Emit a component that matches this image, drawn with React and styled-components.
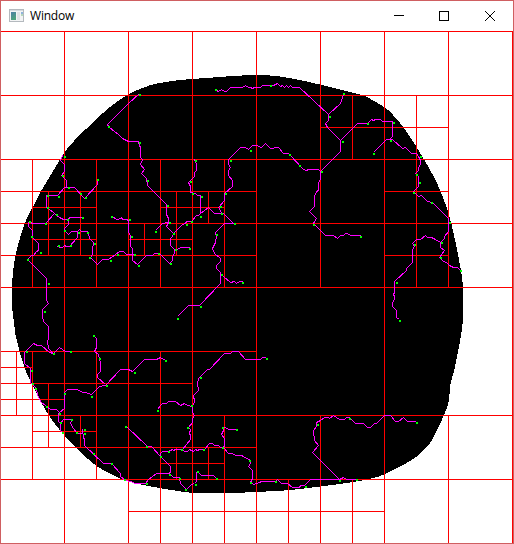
import React from 'react';
import styled, { createGlobalStyle } from 'styled-components';

const GlobalStyle = createGlobalStyle`
  html, body { margin: 0; padding: 0; background: #fff; }
`;

const WindowFrame = styled.main`
  position: relative;
  display: flex;
  flex-direction: column;
  width: 514px;
  height: 544px;
  overflow: hidden;
  background: #fff;

  &::after {
    content: '';
    position: absolute;
    inset: 0;
    border: 1px solid #cf5f61;
    pointer-events: none;
  }
`;

const TitleBar = styled.header`
  display: flex;
  flex: 0 0 31px;
  align-items: center;
  box-sizing: border-box;
  height: 31px;
  padding: 1px 1px 0 9px;
  background: #fff;
`;

const AppIcon = styled.svg`
  display: block;
  width: 15px;
  height: 13px;
  margin-top: -2px;
`;

const Title = styled.h1`
  flex: 1;
  margin: 0 0 0 6px;
  color: #000;
  font: 400 12px/16px 'Open Sans', 'Noto Sans', sans-serif;
  letter-spacing: -0.2px;
`;

const Controls = styled.div`
  display: flex;
`;

const ControlButton = styled.button`
  display: flex;
  align-items: center;
  justify-content: center;
  width: ${({ $width }) => $width || 46}px;
  height: 30px;
  margin: 0;
  padding: 0;
  border: 0;
  background: transparent;
`;

const Glyph = styled.svg`
  display: block;
  width: 10px;
  height: 10px;
  fill: none;
  stroke: #000;
  stroke-width: 1;
`;

const Canvas = styled.svg`
  display: block;
  flex: 0 0 513px;
  width: 514px;
  height: 513px;
`;

const Blob = styled.path`
  fill: #000;
`;

const GridLines = styled.path`
  fill: none;
  stroke: #f00;
  stroke-width: 1;
`;

const Trail = styled.polyline`
  fill: none;
  stroke: #f0f;
  stroke-width: 1;
`;

const Waypoint = styled.rect`
  fill: #0f0;
`;

// Each entry is [x, y1, y2].
const verticals = [
  [0, 31, 543], [64, 31, 543], [128, 31, 543], [192, 31, 543], [256, 31, 543],
  [384, 31, 543], [512, 31, 543], [320, 31, 287], [320, 415, 543],
  [448, 31, 287], [448, 415, 543],
  [32, 159, 287], [32, 351, 479], [96, 159, 287], [96, 351, 479],
  [160, 159, 287], [160, 351, 543], [224, 159, 287], [224, 415, 543],
  [288, 479, 543], [352, 95, 159], [352, 479, 543], [416, 95, 287],
  [16, 351, 415], [48, 191, 255], [48, 383, 447], [80, 191, 255],
  [80, 415, 447], [144, 223, 255], [176, 191, 255], [176, 447, 479],
  [208, 191, 223], [208, 447, 479],
];

// Each entry is [y, x1, x2].
const horizontals = [
  [31, 0, 512], [95, 0, 512], [159, 0, 512], [223, 0, 512], [287, 0, 512],
  [351, 0, 256], [415, 0, 512], [479, 0, 512],
  [127, 320, 448], [191, 0, 256], [191, 384, 448], [255, 0, 256],
  [255, 384, 448], [383, 0, 192], [447, 0, 256], [511, 128, 384],
  [207, 32, 96], [207, 160, 224], [239, 32, 96], [239, 128, 192],
  [367, 0, 32], [399, 0, 64], [431, 32, 96], [463, 160, 224],
];

const gridPath = [
  ...verticals.map(([x, a, b]) => `M${x + 0.5} ${a}V${b + 1}`),
  ...horizontals.map(([y, a, b]) => `M${a} ${y + 0.5}H${b + 1}`),
].join('');

const outline = [
  [128, 94.5], [148, 86], [160, 83], [176, 80.5], [193, 79], [234, 76],
  [256, 75], [272.5, 75.7], [292.5, 78.5], [320.5, 84.7], [356, 93.5],
  [366, 96.7], [384, 107], [393, 115], [404, 128], [416.5, 147], [430.7, 171],
  [439.5, 189], [448.5, 213], [455, 240], [461, 271], [463, 290], [463, 317],
  [461, 335], [458, 352], [454, 371], [450, 386], [449, 400], [444, 415],
  [432, 440], [423, 450.5], [411.7, 460], [385, 474], [370, 478.7],
  [350, 482.5], [320, 486.5], [290, 490], [270, 491.3], [245, 492.5],
  [224, 493], [193, 492.7], [181, 491.5], [151, 486.5], [128, 481.5],
  [112, 474.5], [96.5, 466], [80, 451.5], [64.5, 435.5], [48.5, 415],
  [32.5, 385], [24, 366], [16, 337], [14, 322], [12, 306], [12, 284],
  [16, 253], [25, 223], [32.5, 207.5], [43.5, 187], [64, 153.5], [74, 141],
  [96, 119.5], [112, 105.5],
];

// Closed Catmull-Rom spline through the given points, as cubic segments.
function smoothPath(points) {
  const at = (i) => points[(i + points.length) % points.length];
  const segments = points.map((p, i) => {
    const prev = at(i - 1);
    const next = at(i + 1);
    const after = at(i + 2);
    const c1 = [p[0] + (next[0] - prev[0]) / 6, p[1] + (next[1] - prev[1]) / 6];
    const c2 = [next[0] - (after[0] - p[0]) / 6, next[1] - (after[1] - p[1]) / 6];
    return `C${c1.join(' ')} ${c2.join(' ')} ${next.join(' ')}`;
  });
  return `M${points[0].join(' ')}${segments.join('')}Z`;
}

const blobPath = smoothPath(outline);

const trails = [
  '139,93 128,103 107,124 108,126 115,132 117,133 122,138 128,141 138,141 139,145 140,147 140,157 142,159 140,164 144,169 141,173 146,178 147,185 166,204 166,214 168,218 168,222 166,226 173,233 172,236 170,238 170,245 174,249 174,253 172,256 172,260 169,263 160,254 154,253 152,255 146,255 137,264 132,260 132,248 130,246 130,235 128,232 128,220 126,219 122,219 121,217 118,219 116,219 112,216',
  '174,249 177,249 180,247 189,247',
  '134,254 128,254 126,254 123,251 119,251 115,254 108,259 102,259 97,264 90,257 92,254 92,250 93,242 89,238 88,232 87,231 81,231 79,229 77,231 77,237 69,246 66,246 64,245 62,247 60,247 57,246',
  '77,231 71,231 68,234 64,230 64,228 68,224 68,219 69,217 82,217',
  '68,219 63,219 59,217 54,213 48,208 46,207 46,195 57,195 64,187 74,187 84,198 97,184 97,179',
  '54,213 45,223 32,223 30,222 28,222 28,226 32,230 32,237 38,243 38,250 36,251 33,255 31,255 27,259 28,260 46,278 46,300 48,303 42,309 42,316 43,321 48,326 48,338 47,341 48,348 53,353 59,347 65,351 71,351',
  '53,353 49,352 41,345 37,345 35,344 33,343 26,350 24,352 24,363 30,368 30,382 36,388 37,394 40,401 46,406 50,409 56,409 59,412 64,408 64,392 67,389 77,389 82,392 85,392 91,394 99,386 105,385 120,369 128,369 132,371 144,359 156,359 160,357 165,360',
  '105,384 97,377 97,374 100,371 100,363 98,354 94,351 96,347 96,338 94,336',
  '59,412 58,413 58,421 60,423 60,430 63,433',
  '60,423 63,419 72,419 70,422 72,427 77,433 82,433 82,429 83,437 84,439 84,445 103,463 111,463 120,473 120,476 125,480 130,481 135,483 145,483 148,479 156,473 169,473 170,471 170,466 160,456 151,446 147,446 126,426',
  '169,473 173,477 179,477 180,483 186,489 191,484 194,483 196,481 196,472 198,472 201,475 213,475 216,478',
  '160,456 160,453 162,451 168,451 172,449 173,450 175,449 182,449 184,451 187,451 189,449 191,450 193,451 195,449 197,450 199,449 204,449 209,443 212,443 214,445 218,445 220,447 223,447 228,453 232,453 235,455 241,455 250,460 250,463 248,466 252,470 252,478 250,482 253,484 259,482 261,481 275,481 277,479 281,483 287,483 292,487 299,487 300,485 304,485 310,479 339,479 343,477 346,479 356,479',
  '223,447 224,445 224,438 221,434 223,430 222,427 225,427 228,429 236,429',
  '339,479 312,452 318,445 314,440 313,430 316,426 316,422 320,420 324,417 328,417 329,418 333,415 336,417 339,419 344,419 346,417 349,417 355,423 363,423 367,427 370,427 374,423 376,423 384,415 390,415 395,421 398,421 403,417 407,421 415,421',
  '182,449 190,439 190,435 189,433 190,429 188,427 192,422 192,418 194,415 192,412 192,406 194,401 193,395 198,390 197,383 198,378 207,369 209,369 224,353 230,353 232,351 238,351 245,359 260,359 262,357 265,357',
  '192,406 187,405 184,403 180,405 175,401 168,401 166,403 162,403 160,405 157,409',
  '155,230 162,223 168,222',
  '173,233 182,224 185,223 186,221 191,221 196,215 198,215 200,213 200,195 197,195 195,193 190,192 190,186 188,182 194,176 194,172 196,170 196,164 194,159',
  '200,213 208,207 214,213 223,213 233,223 224,223 215,232 216,236 215,242 212,248 214,253 220,258 220,261 216,265 216,268 220,272 220,283 199,305 188,305 177,316',
  '220,273 223,276 230,282 234,281 236,283 239,281 242,281',
  '221,213 220,210 218,207 224,200 224,193 232,186 232,180 228,175 228,170 230,167 228,164 228,159 240,147 245,147 248,149 252,145 256,145 261,147 265,143 270,148 278,147 283,153 288,153 303,169 306,170 308,169 318,169 320,171 340,151 340,140 357,123 367,123 370,120 371,119 373,120 375,119 380,119 382,121 392,121 392,136 389,139 386,139 373,152',
  '340,140 327,127 325,123 328,120 328,114 299,87 292,87 290,85 288,87 286,85 284,87 282,85 280,86 277,83 273,85 262,85 260,87 254,87 252,88 250,87 248,87 245,85 242,87 230,87 226,91 224,91 221,89 218,91 216,90',
  '328,114 340,103 342,97 343,94',
  '389,139 392,139 402,148 405,147 411,153 416,153 418,156 420,160 420,164 418,167 418,170 415,173 418,176 418,186 413,191 418,196 421,195 427,201 432,202 448,218 448,231 444,236 444,238 440,242 435,239 431,237 427,237 425,235 420,239 416,239 412,243 414,246 412,249 412,262 406,268 406,270 394,281 394,292 393,294 394,296 394,299 392,302 392,306 396,310 396,317 399,319',
  '440,242 440,247 444,250 439,257 443,261 446,262 449,265 453,267 457,267 460,270',
  '320,171 320,178 318,183 318,190 316,191 314,196 314,206 309,211 316,218 313,223 325,235 333,235 337,238 340,235 343,235 345,233 347,233 350,235 360,235',
  '62,155 60,160 64,164 64,171 61,175 66,180 66,187',
];

const waypoints = [
  [108,126],[64,156],[62,175],[68,187],[97,179],[215,89],[139,94],[139,142],
  [147,180],[195,160],[190,181],[230,160],[250,150],[270,85],[343,93],[329,116],
  [367,123],[342,141],[373,153],[289,154],[299,165],[321,171],[393,122],[390,140],
  [420,156],[416,174],[419,182],[58,196],[47,195],[80,193],[85,197],[47,207],
  [56,214],[45,223],[67,219],[82,217],[29,221],[111,216],[64,230],[78,232],
  [87,232],[31,236],[58,245],[70,245],[94,243],[40,252],[27,259],[89,257],
  [110,260],[117,254],[48,283],[44,311],[129,219],[131,236],[134,254],[138,265],
  [158,253],[155,231],[167,205],[169,222],[173,233],[175,249],[189,248],[170,263],
  [186,224],[191,221],[200,216],[192,193],[201,196],[225,193],[220,206],[221,213],
  [234,223],[216,234],[221,274],[242,282],[200,306],[177,318],[313,224],[360,236],
  [413,192],[431,202],[449,222],[441,242],[414,244],[440,257],[460,270],[396,282],
  [399,320],[26,351],[53,353],[70,351],[93,335],[99,358],[31,370],[106,385],
  [91,396],[64,393],[32,383],[35,388],[46,406],[59,413],[60,422],[71,419],
  [62,432],[76,432],[84,429],[84,433],[93,453],[111,463],[124,479],[125,426],
  [134,372],[165,360],[200,377],[266,358],[157,410],[191,405],[187,427],[181,449],
  [168,451],[203,449],[222,427],[236,429],[222,447],[146,446],[160,456],[146,483],
  [169,474],[179,478],[185,489],[195,484],[197,471],[216,478],[249,460],[250,482],
  [275,481],[317,424],[349,418],[416,422],[305,486],[339,480],[356,479],
];

function WindowIcon() {
  return (
    <AppIcon viewBox="0 0 15 13" aria-hidden="true">
      <defs>
        <linearGradient id="pane" x1="0" y1="0" x2="0.4" y2="1">
          <stop offset="0" stopColor="#4e7fa6" />
          <stop offset="1" stopColor="#4fa37c" />
        </linearGradient>
      </defs>
      <rect x="0.5" y="0.5" width="14" height="12" fill="#f3f4f5" stroke="#b4b9be" />
      <rect x="1" y="1" width="13" height="1" fill="#d5dade" />
      <rect x="2" y="3" width="5" height="8" fill="url(#pane)" />
      <rect x="8" y="3" width="3" height="8" fill="#e1e3e5" />
      <rect x="12" y="3" width="2" height="2" fill="#8fb4dc" />
      <rect x="12" y="5" width="2" height="2" fill="#b4d7bd" />
    </AppIcon>
  );
}

export default function App() {
  return (
    <>
      <GlobalStyle />
      <WindowFrame>
        <TitleBar>
          <WindowIcon />
          <Title>Window</Title>
          <Controls>
            <ControlButton $width={44} aria-label="Minimize">
              <Glyph viewBox="0 0 10 10" shapeRendering="crispEdges">
                <path d="M0 4.5H10" />
              </Glyph>
            </ControlButton>
            <ControlButton $width={46} aria-label="Maximize">
              <Glyph viewBox="0 0 10 10" shapeRendering="crispEdges">
                <rect x="0.5" y="0.5" width="9" height="9" />
              </Glyph>
            </ControlButton>
            <ControlButton $width={46} aria-label="Close">
              <Glyph viewBox="0 0 10 10">
                <path d="M0 0L10 10M10 0L0 10" />
              </Glyph>
            </ControlButton>
          </Controls>
        </TitleBar>
        <Canvas viewBox="0 31 514 513" shapeRendering="crispEdges">
          <Blob d={blobPath} />
          <GridLines d={gridPath} />
          <g transform="translate(0.5 0.5)">
            {trails.map((points) => (
              <Trail key={points} points={points} />
            ))}
          </g>
          {waypoints.map(([x, y]) => (
            <Waypoint key={`${x}-${y}`} x={x} y={y} width="2" height="2" />
          ))}
        </Canvas>
      </WindowFrame>
    </>
  );
}
